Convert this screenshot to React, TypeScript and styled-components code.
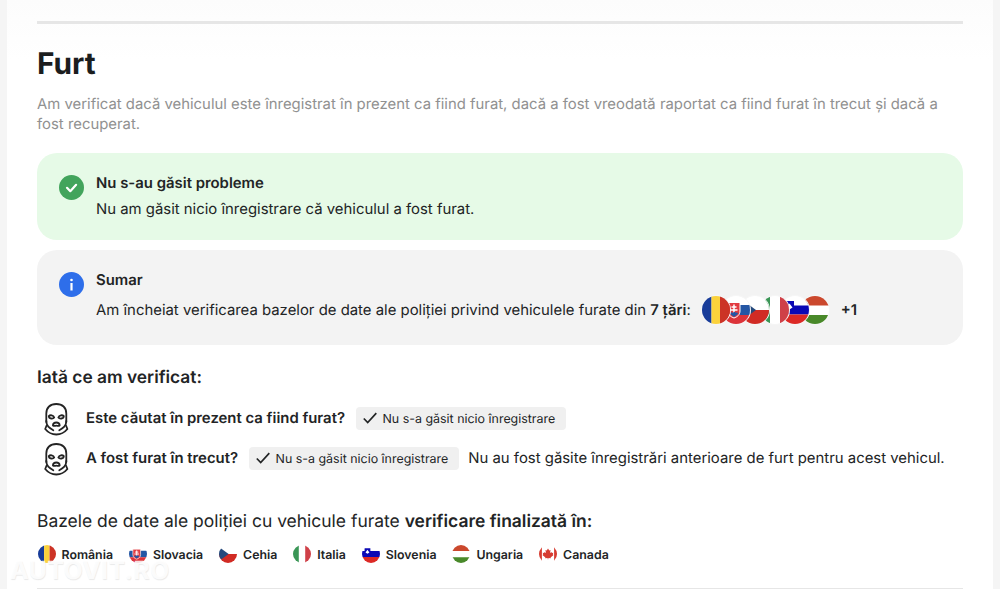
import React from 'react';
import styled, { createGlobalStyle } from 'styled-components';

const GlobalStyle = createGlobalStyle`
  * { box-sizing: border-box; }
  body {
    margin: 0;
    background: #f5f5f5;
    font-family: Inter, 'Liberation Sans', sans-serif;
    text-rendering: geometricPrecision;
    color: #222425;
    overflow: hidden;
  }
`;

const Card = styled.main`
  position: relative;
  height: 589px;
  margin: 0 7px;
  padding: 21px 30px 0;
  background: linear-gradient(#fcfcfc, #ffffff 60px);
  overflow: hidden;
`;

const Divider = styled.hr<{ $thickness: number }>`
  height: ${p => p.$thickness}px;
  margin: 0;
  border: none;
  background: #e6e6e6;
`;

const Title = styled.h1`
  margin: 20px 0 10px;
  font-size: 29.8px;
  line-height: 40px;
  font-weight: 700;
  color: #1b1d1e;
`;

const Lead = styled.p`
  margin: 0 0 19px;
  font-size: 14.89px;
  line-height: 20px;
  color: #919191;
`;

const Notice = styled.section<{ $tone: 'success' | 'info' }>`
  display: flex;
  gap: 12px;
  height: ${p => (p.$tone === 'success' ? 87 : 95)}px;
  margin-bottom: ${p => (p.$tone === 'success' ? 10 : 21)}px;
  padding: 17px 22px;
  border-radius: 20px;
  background: ${p => (p.$tone === 'success' ? '#e6fae7' : '#f3f3f3')};
`;

const StatusIcon = styled.svg`
  flex: none;
  width: 25px;
  height: 25px;
  margin-top: 5px;
`;

const NoticeTitle = styled.div`
  font-size: 14.9px;
  line-height: 26px;
  font-weight: 600;
`;

const NoticeText = styled.div`
  display: flex;
  align-items: center;
  font-size: 14.9px;
  line-height: 26px;
  white-space: pre;
`;

const SummaryText = styled(NoticeText)`
  height: 34px;
`;

const FlagStack = styled.div`
  display: flex;
  margin: 0 12px 0 11px;
`;

const FlagSvg = styled.svg<{ $size: number }>`
  display: block;
  flex: none;
  width: ${p => p.$size}px;
  height: ${p => p.$size}px;
`;

const StackItem = styled.div<{ $order: number }>`
  position: relative;
  z-index: ${p => p.$order};
  border-radius: 50%;
  box-shadow: 0 0 0 1px #f6f6f6;

  & + & {
    margin-left: -8.2px;
  }
`;

const Strong = styled.span`
  font-weight: 600;
`;

const Subtitle = styled.h2`
  margin: 0 0 8px;
  font-size: 17.35px;
  line-height: 24px;
  font-weight: 600;
`;

const CheckRow = styled.div`
  display: flex;
  align-items: center;
  height: 40px;
  font-size: 14.9px;
  white-space: nowrap;
`;

const Mask = styled.svg`
  flex: none;
  width: 26px;
  height: 34px;
  margin: 1px 17px 0 6px;
`;

const Chip = styled.span`
  display: flex;
  align-items: center;
  gap: 5.5px;
  height: 23px;
  margin: 0 9.5px 0 11px;
  padding: 0 10.5px 0 7px;
  border-radius: 4px;
  background: #f0f0f0;
  font-size: 12.43px;
`;

const Databases = styled.h2`
  margin: 32px 0 10px;
  font-size: 17.47px;
  line-height: 24px;
  font-weight: 400;
`;

const Countries = styled.div`
  display: flex;
  gap: 15.9px;
  height: 20px;
  padding-left: 0.5px;
`;

const Country = styled.div`
  display: flex;
  align-items: center;
  gap: 6px;
  font-size: 12.35px;
  font-weight: 600;
`;

const BottomLine = styled(Divider)`
  margin-top: 24px;
`;

const Watermark = styled.div`
  position: absolute;
  left: 3px;
  top: 556px;
  font-size: 25px;
  line-height: 30px;
  font-weight: 700;
  letter-spacing: 0.35px;
  color: rgba(255, 255, 255, 0.85);
  text-shadow: 0.5px 0.5px 1px rgba(0, 0, 0, 0.09);
  white-space: nowrap;
`;

type Code = 'ro' | 'sk' | 'cz' | 'it' | 'si' | 'hu' | 'ca';

// every flag is drawn on a 28x28 field and clipped to a circle
const flags: Record<Code, React.ReactNode> = {
  ro: (
    <>
      <path fill="#183c99" d="M0 0h9.5v28H0z" />
      <path fill="#fbd23c" d="M9.5 0H18v28H9.5z" />
      <path fill="#cc3325" d="M18 0h10v28H18z" />
    </>
  ),
  sk: (
    <>
      <path fill="#fff" d="M0 0h28v28H0z" />
      <path fill="#2456a4" d="M0 9h28v10H0z" />
      <path fill="#dc3339" d="M0 19h28v9H0z" />
      <path fill="#e23b40" stroke="#fff" d="M6 6.500h12v8.500c0 4-3 6-6 7-3-1-6-3-6-7z" />
      <path fill="none" stroke="#fff" strokeWidth="1.5" d="M12 8.500V17M9.500 11h5M8.500 14h7" />
      <path fill="#2456a4" d="M8 18c1-2 2-2 3-1 1-2 2-1 3 0 1-1 2 0 2 1l-4 3z" />
    </>
  ),
  cz: (
    <>
      <path fill="#fff" d="M0 0h28v14H0z" />
      <path fill="#d12b24" d="M0 14h28v14H0z" />
      <path fill="#24497c" d="M0 3l15 11L0 25z" />
    </>
  ),
  it: (
    <>
      <path fill="#fff" d="M0 0h28v28H0z" />
      <path fill="#3a9656" d="M0 0h9v28H0z" />
      <path fill="#cf4048" d="M19 0h9v28h-9z" />
    </>
  ),
  si: (
    <>
      <path fill="#fff" d="M0 0h28v28H0z" />
      <path fill="#0b08b5" d="M0 9.500h28v9H0z" />
      <path fill="#dc2925" d="M0 18.500h28V28H0z" />
      <path fill="#0b08b5" d="M4 5h9v8l-4.500 3L4 13z" />
      <path fill="#fff" d="M5.500 11.500l3-4 3 4-3 2z" />
    </>
  ),
  hu: (
    <>
      <path fill="#fff" d="M0 0h28v28H0z" />
      <path fill="#cb482d" d="M0 0h28v9.500H0z" />
      <path fill="#49892a" d="M0 19h28v9H0z" />
    </>
  ),
  ca: (
    <>
      <path fill="#fff" d="M0 0h28v28H0z" />
      <path fill="#d63b30" d="M0 0h4.500v28H0zM23.500 0H28v28h-4.500z" />
      <path
        fill="#d63b30"
        d="M14 5.500l-2 3.200-2-.9.900 4.700-2.400-1.800-.5 1.600-2.300-.3.800 2.800-1.200.8 4.700 3.700-.5 1.400 4-.5V22h1v-1.800l4 .5-.5-1.400 4.700-3.700-1.200-.8.800-2.800-2.300.3-.5-1.600-2.400 1.800.9-4.700-2 .9z"
      />
    </>
  ),
};

const Flag: React.FC<{ code: Code; size: number }> = ({ code, size }) => {
  const id = `round-${code}-${size}`;
  return (
    <FlagSvg $size={size} viewBox="0 0 28 28">
      <clipPath id={id}>
        <circle cx="14" cy="14" r="14" />
      </clipPath>
      <g clipPath={`url(#${id})`}>{flags[code]}</g>
    </FlagSvg>
  );
};

const BalaclavaIcon = () => (
  <Mask viewBox="0 0 26 34" fill="none" stroke="#242424" strokeWidth="1.8" strokeLinecap="round" strokeLinejoin="round">
    <path d="M3.300 20V11.500C3.300 5.500 7.200 2 13.300 2s10 3.500 10 9.500V20" />
    <path d="M3.300 19c0 5 3 7 7 9.200M23.300 19c0 5-3 7-7 9.200" />
    <path d="M3.600 23.500L2.200 27c2.800 3.400 6.800 5.500 11.100 5.500s8.300-2.100 11.100-5.500L23 23.500" />
    <path d="M5.800 14.200c1.300-1.500 4.700-1.300 5.400 1.300-1.100 1.600-5.200 1.500-5.400-1.300z" />
    <path d="M20.800 14.200c-1.300-1.500-4.700-1.300-5.400 1.300 1.100 1.600 5.200 1.500 5.400-1.300z" />
    <path d="M9.900 23.400c.2-2 1.500-2.900 3.400-2.900s3.200.9 3.400 2.900c-1.100.8-2.200.3-3.400.3s-2.300.5-3.400-.3z" />
  </Mask>
);

const NoRecordChip = () => (
  <Chip>
    <svg width="14" height="12" viewBox="0 0 14 12" fill="none" stroke="#222425" strokeWidth="1.7">
      <path d="M.8 6.500L4.700 10.500 13.300 1.200" />
    </svg>
    Nu s-a găsit nicio înregistrare
  </Chip>
);

const stack: Code[] = ['ro', 'sk', 'cz', 'it', 'si', 'hu'];

const countries: { code: Code; name: string }[] = [
  { code: 'ro', name: 'România' },
  { code: 'sk', name: 'Slovacia' },
  { code: 'cz', name: 'Cehia' },
  { code: 'it', name: 'Italia' },
  { code: 'si', name: 'Slovenia' },
  { code: 'hu', name: 'Ungaria' },
  { code: 'ca', name: 'Canada' },
];

export default function App() {
  return (
    <>
      <GlobalStyle />
      <Card>
        <Divider $thickness={3} />
        <Title>Furt</Title>
        <Lead>
          Am verificat dacă vehiculul este înregistrat în prezent ca fiind furat, dacă a fost vreodată raportat ca fiind furat în trecut și dacă a
          <br />
          fost recuperat.
        </Lead>

        <Notice $tone="success">
          <StatusIcon viewBox="0 0 25 25">
            <circle cx="12.500" cy="12.500" r="12.500" fill="#42a45c" />
            <path d="M8 12.800l3.300 3.400 5.800-6.400" fill="none" stroke="#fff" strokeWidth="2.200" strokeLinecap="round" strokeLinejoin="round" />
          </StatusIcon>
          <div>
            <NoticeTitle>Nu s-au găsit probleme</NoticeTitle>
            <NoticeText>Nu am găsit nicio înregistrare că vehiculul a fost furat.</NoticeText>
          </div>
        </Notice>

        <Notice $tone="info">
          <StatusIcon viewBox="0 0 25 25">
            <circle cx="12.500" cy="12.500" r="12.500" fill="#2e6eea" />
            <circle cx="12.500" cy="8" r="1.300" fill="#fff" />
            <path d="M12.500 11v7.500" stroke="#fff" strokeWidth="2.200" />
          </StatusIcon>
          <div>
            <NoticeTitle>Sumar</NoticeTitle>
            <SummaryText>
              Am încheiat verificarea bazelor de date ale poliției privind vehiculele furate din <Strong>7 țări</Strong>:
              <FlagStack>
                {stack.map((code, i) => (
                  <StackItem key={code} $order={stack.length - i}>
                    <Flag code={code} size={28} />
                  </StackItem>
                ))}
              </FlagStack>
              <Strong>+1</Strong>
            </SummaryText>
          </div>
        </Notice>

        <Subtitle>Iată ce am verificat:</Subtitle>
        <CheckRow>
          <BalaclavaIcon />
          <Strong>Este căutat în prezent ca fiind furat?</Strong>
          <NoRecordChip />
        </CheckRow>
        <CheckRow>
          <BalaclavaIcon />
          <Strong>A fost furat în trecut?</Strong>
          <NoRecordChip />
          <span>Nu au fost găsite înregistrări anterioare de furt pentru acest vehicul.</span>
        </CheckRow>

        <Databases>
          Bazele de date ale poliției cu vehicule furate <Strong>verificare finalizată în:</Strong>
        </Databases>
        <Countries>
          {countries.map(c => (
            <Country key={c.code}>
              <Flag code={c.code} size={18} />
              {c.name}
            </Country>
          ))}
        </Countries>
        <BottomLine $thickness={2} />
        <Watermark>AUTOVIT.RO</Watermark>
      </Card>
    </>
  );
}
